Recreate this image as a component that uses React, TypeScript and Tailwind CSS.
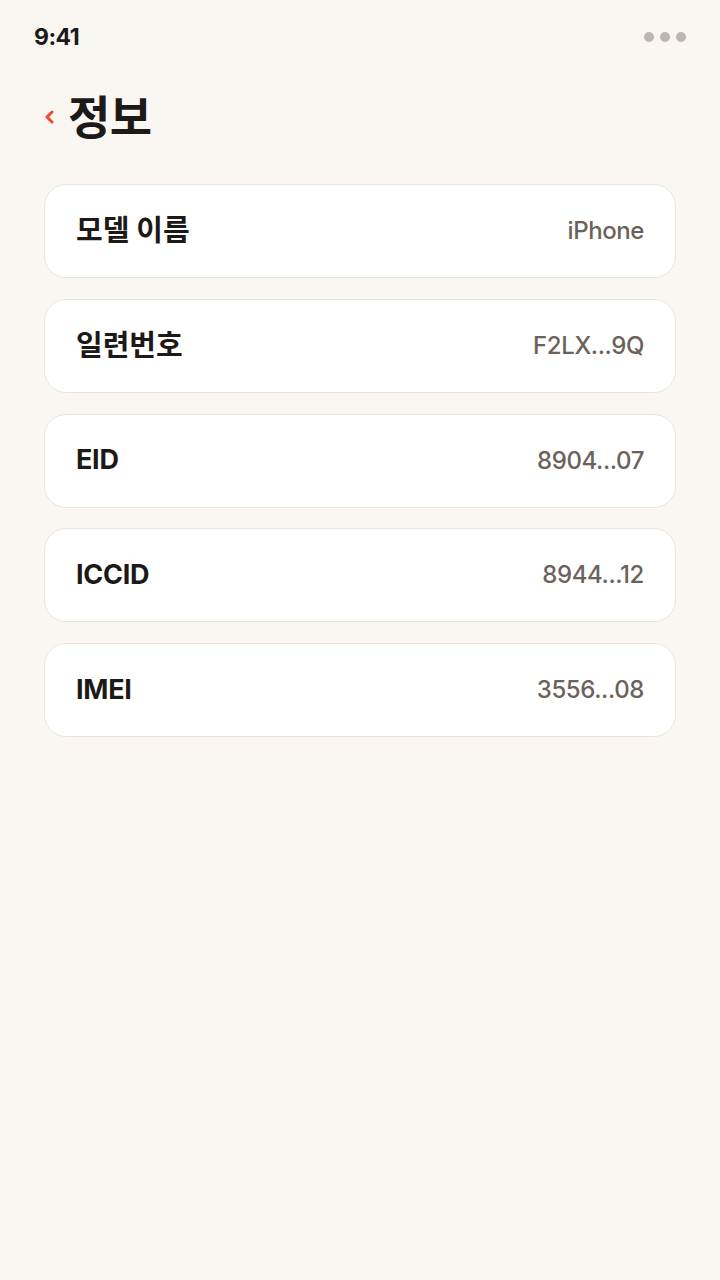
import React from 'react';

const rows = [
  { label: '모델 이름', value: 'iPhone', ko: true },
  { label: '일련번호', value: 'F2LX...9Q', ko: true },
  { label: 'EID', value: '8904...07', ko: false },
  { label: 'ICCID', value: '8944...12', ko: false },
  { label: 'IMEI', value: '3556...08', ko: false },
];

const font = { fontFamily: 'Inter, "Noto Sans CJK KR", sans-serif' };

export default function App() {
  return (
    <div className="min-h-[1280px] w-[720px] bg-[#faf7f2] text-[#1c1917]" style={font}>
      {/* status bar */}
      <div className="flex items-center justify-between h-[74px] pl-[34px] pr-[34px]">
        <span className="text-[23px] font-bold tracking-[-0.5px]">9:41</span>
        <div className="flex gap-[6px]">
          <span className="w-[10px] h-[10px] rounded-full bg-[#bdb6ad]" />
          <span className="w-[10px] h-[10px] rounded-full bg-[#bdb6ad]" />
          <span className="w-[10px] h-[10px] rounded-full bg-[#bdb6ad]" />
        </div>
      </div>

      {/* header */}
      <div className="flex items-center gap-[14px] pl-[44px] h-[86px]">
        <svg width="10" height="16" viewBox="0 0 10 16" fill="none">
          <path d="M8 3 L3 8 L8 13" stroke="#f04a2a" strokeWidth="3" strokeLinecap="round" strokeLinejoin="round" />
        </svg>
        <h1 className="text-[46px] font-bold leading-none tracking-[-0.5px]">정보</h1>
      </div>

      {/* rows */}
      <div className="flex flex-col gap-[20.75px] px-[44px] pt-[24px]">
        {rows.map((r) => (
          <div
            key={r.label}
            className="flex items-center justify-between h-[94px] px-[31px] bg-white border border-[#ebe4da] rounded-[22px]"
          >
            <span className={r.ko ? 'text-[29px] font-bold' : 'text-[27px] font-bold tracking-[-0.3px]'}>
              {r.label}
            </span>
            <span className="text-[24px] font-medium text-[#6b625b] tracking-[-0.4px]">{r.value}</span>
          </div>
        ))}
      </div>
    </div>
  );
}
